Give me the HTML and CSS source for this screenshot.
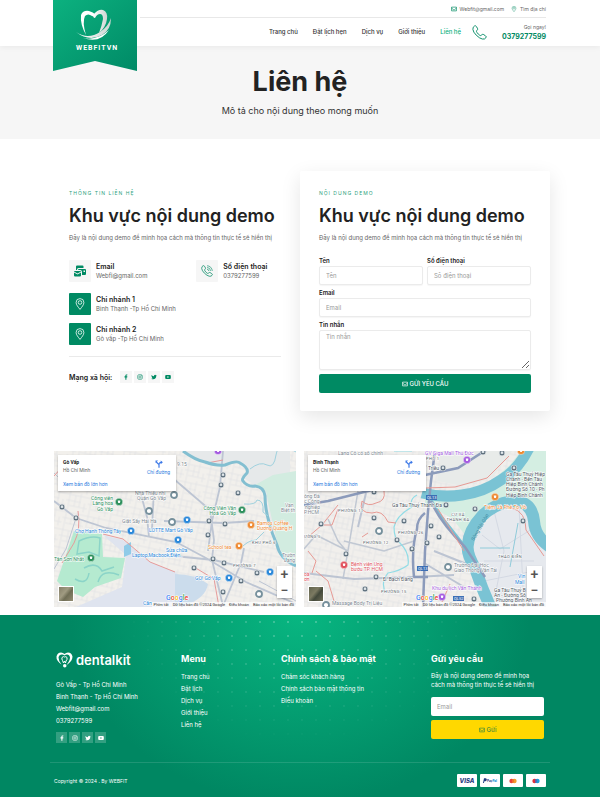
FILE: index.html
```html
<!DOCTYPE html>
<html lang="vi">
<head>
  <meta charset="UTF-8" />
  <meta name="viewport" content="width=device-width, initial-scale=1.0" />
  <title>Liên hệ</title>
  <link rel="stylesheet" href="styles.css">
</head>
<body>

  <!-- shared icons -->
  <svg class="sprite" aria-hidden="true">
    <symbol id="i-mail" viewBox="0 0 16 12"><path d="M1.5 1h13v10h-13zM1.5 3.5l4.8 4q1.7 1.2 3.4 0l4.8-4" fill="none" stroke="currentColor" stroke-width="1.8" stroke-linejoin="round"/></symbol>
    <symbol id="i-pin" viewBox="0 0 16 20"><path d="M8 19C5 15 1.5 11.500 1.500 7.500a6.500 6.500 0 0 1 13 0C14.500 11.500 11 15 8 19z" fill="none" stroke="currentColor" stroke-width="1.300"/><circle cx="8" cy="7.500" r="3" fill="none" stroke="currentColor" stroke-width="1.300"/></symbol>
    <symbol id="i-phone" viewBox="0 0 24 24"><path d="M2 3.500Q4 1 5.500 1.200Q7 1.500 9 6Q9.500 7.500 7.500 9Q6.500 10 8 12Q10 15 12.500 16.500Q14 17.500 15 16.200Q16.500 14.500 18 15Q22.500 17.500 22.800 18.800Q22.800 20.500 20 22.300Q17 23.500 12 20.500Q6 16.500 3 11.500Q.3 6.500 2 3.500z" fill="none" stroke="currentColor" stroke-width="1.500"/></symbol>
    <symbol id="i-call" viewBox="0 0 24 24"><use href="#i-phone"/><path d="M12 1.500a10.500 10.500 0 0 1 10.500 10.500M12 5a7 7 0 0 1 7 7M12 8.500a3.500 3.500 0 0 1 3.500 3.500" fill="none" stroke="currentColor" stroke-width="1.200"/></symbol>
    <symbol id="i-bulk" viewBox="0 0 24 22"><path d="M6 0h11a2 2 0 0 1 2 2v3H9a3 3 0 0 0-3 3v1H4V2a2 2 0 0 1 2-2z" fill="currentColor"/><path d="M10 7h12a2 2 0 0 1 2 2v8a2 2 0 0 1-2 2h-6v-6a4 4 0 0 0-4-4H8a2 2 0 0 1 2-2zM19 10v3h3v-3zM1 11h12q1 0 1 1l-7 4-7-4q0-1 1-1zM0 14l7 4 7-4v6a2 2 0 0 1-2 2H2a2 2 0 0 1-2-2z" fill="currentColor" fill-rule="evenodd"/></symbol>
    <symbol id="i-fb" viewBox="0 0 16 16"><path d="M6.300 15V9H4V6.300h2.300V4.500C6.300 2.200 7.600 1 9.700 1q1 0 2 .2v2.200h-1.200c-1.100 0-1.400.6-1.400 1.300v1.600h2.500L11.200 9H9.100v6z" fill="currentColor"/></symbol>
    <symbol id="i-ig" viewBox="0 0 16 16"><rect x="1.800" y="1.800" width="12.400" height="12.400" rx="3.500" fill="none" stroke="currentColor" stroke-width="1.500"/><circle cx="8" cy="8" r="3" fill="none" stroke="currentColor" stroke-width="1.500"/><circle cx="11.700" cy="4.300" r="1" fill="currentColor"/></symbol>
    <symbol id="i-tw" viewBox="0 0 16 16"><path d="M15.500 3.500q-.8.400-1.700.5.900-.6 1.300-1.600-.9.500-1.900.7A3 3 0 0 0 8 5.800Q4.200 5.600 1.600 2.500a3 3 0 0 0 .9 4q-.7 0-1.300-.4 0 2.400 2.400 3-.7.200-1.400 0 .6 2 2.800 2.100Q3.200 12.700.6 12.500 2.800 14 5.400 14c6 0 8.700-5 8.600-9q.9-.6 1.500-1.500z" fill="currentColor"/></symbol>
    <symbol id="i-yt" viewBox="0 0 16 16"><path d="M3 2.800h10q2.500 0 2.500 2.700v5q0 2.700-2.500 2.700H3Q.5 13.200.5 10.500v-5Q.5 2.800 3 2.800zM6.500 5.500v5L10.800 8z" fill="currentColor" fill-rule="evenodd"/></symbol>
    <symbol id="i-route" viewBox="0 0 12 12"><path d="M6 11.500V7L2 3M6 7q0-3.500 4-3.500" fill="none" stroke="#3b78e7" stroke-width="1.800"/><path d="M.8.800h3.800L.8 4.600zM8.500.8L11.800 3.500 8.500 6.200z" fill="#3b78e7"/></symbol>
    <symbol id="m-stop" viewBox="0 0 6 6"><rect x=".3" y=".3" width="5.400" height="5.400" rx="1.800" fill="#60727f" stroke="#fff" stroke-width=".5"/><path d="M1.800 1.500h2.400v2.400H1.800z" fill="#dfe6ea"/></symbol>
    <symbol id="m-pin" viewBox="0 0 10 10"><circle cx="5" cy="4.900" r="4.600" fill="currentColor" stroke="#fff" stroke-width=".5"/><path d="M3.400 3.200h3.200v1.600L6 6.400H4z" fill="#fff"/></symbol>
    <symbol id="m-dot" viewBox="0 0 8 8"><circle cx="4" cy="4" r="3" fill="#fff" stroke="#76909c" stroke-width="1.800"/></symbol>
  </svg>

  <header class="header">
    <div class="container header-inner">
      <a class="brand" href="#" aria-label="WEBFITVN">
        <svg viewBox="0 0 84 71">
          <defs>
            <linearGradient id="ribbon" x1="0" y1="0" x2="1" y2="1">
              <stop offset="0" stop-color="#0cb17f"/><stop offset="1" stop-color="#008a66"/>
            </linearGradient>
            <linearGradient id="silver"><stop offset="0" stop-color="#fff"/><stop offset="1" stop-color="#cdd5d2"/></linearGradient>
          </defs>
          <path d="M0 0h84v71L42 61 0 71z" fill="url(#ribbon)"/>
          <path d="M33 35Q27 24 28 15q2-5 8-4 4 1 7 4-2 2-4 1-4-3-7 0-3 6 1 19z" fill="#fff"/>
          <path d="M40 15q5-6 10-5 5 2 4 9-1 8-8 14 3-8 4-14 0-5-3-5-3 0-5 4-2 0-2-3z" fill="url(#silver)"/>
          <path d="M23 32q12 8 24 0Q55 27 58 18q0 12-9 17-13 7-26-3z" fill="url(#silver)"/>
          <path d="M30 38q14 3 26-8-9 14-26 8z" fill="#fff"/>
          <text x="23" y="50" class="brand-text">WEBFITVN</text>
        </svg>
      </a>
      <div class="header-main">
        <div class="topbar">
          <a href="#"><svg class="ico-top green"><use href="#i-mail"/></svg>Webfit@gmail.com</a>
          <a href="#"><svg class="ico-top green"><use href="#i-pin"/></svg>Tìm địa chỉ</a>
        </div>
        <div class="navbar">
          <nav class="nav">
            <a href="#">Trang chủ</a>
            <a href="#">Đặt lịch hẹn</a>
            <a href="#">Dịch vụ</a>
            <a href="#">Giới thiệu</a>
            <a href="#" class="active">Liên hệ</a>
          </nav>
          <svg class="ico-phone green"><use href="#i-phone"/></svg>
          <div class="call">
            <span>Gọi ngay!</span>
            <a href="#">0379277599</a>
          </div>
        </div>
      </div>
    </div>
  </header>

  <section class="hero">
    <h1>Liên hệ</h1>
    <p>Mô tả cho nội dung theo mong muốn</p>
  </section>

  <section class="container contact">
    <div class="panel">
      <div class="eyebrow">THÔNG TIN LIÊN HỆ</div>
      <h2>Khu vực nội dung demo</h2>
      <p class="lead">Đây là nội dung demo để minh họa cách mà thông tin thực tế sẽ hiển thị</p>
      <div class="info-grid">
        <div class="info">
          <span class="info-icon"><svg><use href="#i-bulk"/></svg></span>
          <div><h3>Email</h3><p>Webfi@gmail.com</p></div>
        </div>
        <div class="info">
          <span class="info-icon"><svg><use href="#i-call"/></svg></span>
          <div><h3>Số điện thoại</h3><p>0379277599</p></div>
        </div>
      </div>
      <div class="info branch">
        <span class="info-icon solid"><svg><use href="#i-pin"/></svg></span>
        <div><h3>Chi nhánh 1</h3><p>Bình Thạnh -Tp Hồ Chí Minh</p></div>
      </div>
      <div class="info branch">
        <span class="info-icon solid"><svg><use href="#i-pin"/></svg></span>
        <div><h3>Chi nhánh 2</h3><p>Gò vấp -Tp Hồ Chí Minh</p></div>
      </div>
      <div class="follow">
        <h3>Mạng xã hội:</h3>
        <div class="socials">
          <a href="#" aria-label="Facebook"><svg><use href="#i-fb"/></svg></a>
          <a href="#" aria-label="Instagram"><svg><use href="#i-ig"/></svg></a>
          <a href="#" aria-label="Twitter"><svg><use href="#i-tw"/></svg></a>
          <a href="#" aria-label="YouTube"><svg><use href="#i-yt"/></svg></a>
        </div>
      </div>
    </div>

    <div class="panel card">
      <div class="eyebrow">NỘI DUNG DEMO</div>
      <h2>Khu vực nội dung demo</h2>
      <p class="lead">Đây là nội dung demo để minh họa cách mà thông tin thực tế sẽ hiển thị</p>
      <form class="form">
        <div class="field">
          <label for="name">Tên</label>
          <input type="text" id="name" placeholder="Tên">
        </div>
        <div class="field">
          <label for="phone">Số điện thoại</label>
          <input type="tel" id="phone" placeholder="Số điện thoại">
        </div>
        <div class="field wide">
          <label for="email">Email</label>
          <input type="email" id="email" placeholder="Email">
        </div>
        <div class="field wide">
          <label for="message">Tin nhắn</label>
          <textarea id="message" placeholder="Tin nhắn"></textarea>
        </div>
        <button type="button" class="btn wide"><svg><use href="#i-mail"/></svg>GỬI YÊU CẦU</button>
      </form>
    </div>
  </section>

  <section class="container maps">
    <div class="map">
      <svg class="map-canvas" viewBox="0 0 242 156" preserveAspectRatio="xMidYMid slice">
        <defs>
          <pattern id="streets" width="22" height="18" patternUnits="userSpaceOnUse" patternTransform="rotate(12)">
            <path d="M0 3h22M0 9h15M4 14h18M3 0v18M9 3v11M14 0v14M19 9v9" stroke="#dddfe3" stroke-width=".6" fill="none"/>
          </pattern>
        </defs>
        <rect width="242" height="156" fill="#f2f0ec"/>
        <rect width="242" height="156" fill="url(#streets)"/>
        <path d="M129 0l22 11 20 3 13-3 9 8-4 8 12 7 10 5 3 15 3 18 8 22 11 14V0z" fill="#e6e9ea"/>
        <path d="M201 34l18-10 23-4v94l-11-6-8-17-8-36-3-15z" fill="#d2ece0"/>
        <path d="M49 84l20 5 27 22 25 10 16 12-6 23H22l46-20 4-32z" fill="#dfe4ef"/>
        <path d="M121 123q20 0 33 10-2 14-24 22h-9z" fill="#cbdcec"/>
        <path d="M20 80l28 3 1 23 22 1-4 20-26 9-12 10-17-7-9-9z" fill="#b5ead0"/>
        <path d="M25 90q12-6 21-3l-1 18-10-4-12 2zM30 117q12-7 18 3l12-4M21 128q12 7 14-6M44 131q4-14 21-7" fill="none" stroke="#8bd4c8" stroke-width="1.500"/>
        <path d="M70 95l7-4v12l-7 3z" fill="#8fcbe8"/>
        <g fill="none" stroke="#bdc5d3" stroke-width="1.800">
          <path d="M0 50l22 17 30 10 70 14 30 16 40 24 50 22M85 36l8 30 2 20M100 38l-2 40M121 29l35 30 4 30-2 20 11 46M169 0l-3 36-8 34-4 30M110 70l60 2 30-2M120 105l40 4 50 12M190 97l-3 15-18 43"/>
          <path d="M22 67L12 98l-12 20M0 22l18 18M205 130l37 20" stroke-width="1"/>
        </g>
        <path d="M24 60q3 18-4 32L8 112M49 83l20 5 27 23 25 10M140 116l20 12 5 28M153 12l16-3M0 25l9-10" fill="none" stroke="#e69b9b" stroke-width="1"/>
        <path d="M129 0q12 9 22 11 11 4 20 3 12-5 15-2 9 5 7 10-6 6-4 8 4 6 12 5 9 1 10 10 0 12 4 26 3 12 8 23 3 14 19 21" fill="none" stroke="#83bfd1" stroke-width="3"/>
        <path d="M196 18q10-8 17-4t9-10 20-3M190 53q12 1 13-4 7 0 6 12l5 4M186 98q8-9 16-9l8-8" fill="none" stroke="#9fd1de" stroke-width="1"/>
        <g>
          <use href="#m-stop" x="5" y="53" width="6" height="6"/><use href="#m-stop" x="19" y="64" width="6" height="6"/>
          <use href="#m-stop" x="166" y="21" width="6" height="6"/><use href="#m-stop" x="164" y="31" width="6" height="6"/>
          <use href="#m-stop" x="181" y="39" width="6" height="6"/><use href="#m-stop" x="152" y="67" width="6" height="6"/>
          <use href="#m-stop" x="168" y="70" width="6" height="6"/><use href="#m-stop" x="151" y="81" width="6" height="6"/>
          <use href="#m-stop" x="156" y="105" width="6" height="6"/><use href="#m-stop" x="167" y="109" width="6" height="6"/>
          <use href="#m-stop" x="137" y="114" width="6" height="6"/><use href="#m-stop" x="200" y="119" width="6" height="6"/>
          <use href="#m-stop" x="184" y="127" width="6" height="6"/><use href="#m-stop" x="166" y="138" width="6" height="6"/>
          <use href="#m-dot" x="91" y="56" width="8" height="8"/><use href="#m-dot" x="116" y="40" width="8" height="8"/>
          <use href="#m-dot" x="114" y="67" width="8" height="8"/><use href="#m-dot" x="201" y="139" width="8" height="8"/>
        </g>
        <g class="t-green"><use href="#m-pin" x="61" y="47" width="8" height="8"/><use href="#m-pin" x="33" y="103" width="8" height="8"/><use href="#m-pin" x="184" y="55" width="8" height="8"/>
          <text x="59" y="49" text-anchor="end">Công viên</text><text x="59" y="54" text-anchor="end">Làng hoa</text><text x="59" y="60" text-anchor="end">Gò Vấp</text>
          <text x="0" y="110">Tân Sơn Nhất</text>
          <text x="182" y="59" text-anchor="end">Công Viên Văn</text><text x="182" y="64" text-anchor="end">Hoá Gò Vấp</text>
        </g>
        <g class="t-blue"><use href="#m-pin" x="73" y="76" width="8" height="8"/><use href="#m-pin" x="129" y="65" width="8" height="8"/><use href="#m-pin" x="120" y="85" width="8" height="8"/><use href="#m-pin" x="171" y="123" width="8" height="8"/><use href="#m-pin" x="212" y="117" width="8" height="8"/>
          <text x="21" y="82">Chợ Hạnh Thông Tây</text><text x="95" y="81">LOTTE Mart Gò Vấp</text>
          <text x="112" y="101">Sửa chữa</text><text x="78" y="106">Laptop,Macbook,Điện..</text>
          <text x="141" y="129">GO! Gò Vấp</text><text x="89" y="154">Cần</text>
        </g>
        <g class="t-orange"><use href="#m-pin" x="193" y="70" width="8" height="8"/><use href="#m-pin" x="181" y="91" width="8" height="8"/>
          <text x="203" y="74">Bamos Coffee</text><text x="203" y="79">Dương Quảng H</text><text x="154" y="98">School tea</text>
        </g>
        <g class="t-purple"><use href="#m-pin" x="160" y="-4" width="8" height="8"/></g>
        <g class="t-grey">
          <text x="81" y="44">Nhà Thiếu nhi</text><text x="83" y="49">Quận Gò Vấp</text><text x="68" y="72">Giặt Sấy Hải Hà</text>
          <text x="231" y="56">Vạn</text><text x="227" y="61">Biệt th</text><text x="228" y="106">Trườn</text><text x="230" y="111">Lang</text><text x="123" y="15">9.15</text>
        </g>
        <g class="t-area"><text x="198" y="93">KHU PHỐ 6</text><text x="179" y="116">PHƯỜNG 7</text></g>
        <text class="t-google" x="112" y="149"><tspan fill="#4285f4">G</tspan><tspan fill="#ea4335">o</tspan><tspan fill="#fbbc05">o</tspan><tspan fill="#4285f4">g</tspan><tspan fill="#34a853">l</tspan><tspan fill="#ea4335">e</tspan></text>
      </svg>
      <div class="map-card">
        <div><strong>Gò Vấp</strong><span>Hồ Chí Minh</span><a href="#">Xem bản đồ lớn hơn</a></div>
        <a href="#" class="route"><svg><use href="#i-route"/></svg>Chỉ đường</a>
      </div>
      <div class="map-thumb"></div>
      <div class="map-zoom"><button type="button" aria-label="Phóng to">+</button><button type="button" aria-label="Thu nhỏ">−</button></div>
      <div class="map-legal"><span>Phím tắt</span><span>Dữ liệu bản đồ ©2024 Google</span><span>Điều khoản</span><span>Báo cáo một lỗi bản đồ</span></div>
    </div>

    <div class="map">
      <svg class="map-canvas" viewBox="0 0 242 156" preserveAspectRatio="xMidYMid slice">
        <rect width="242" height="156" fill="#f1efec"/>
        <rect width="242" height="156" fill="url(#streets)"/>
        <path d="M121 45h30l30-10 24-20 12-15h25v94l-12-12-2-28-14-6-20 6-22 20-8 14-15-20-28-16z" fill="#d4eee2"/>
        <path d="M133 30l25 5 30-8 20-27h-70z" fill="#e8ebe9"/>
        <path d="M184 154l-16-56 8-20 20-22 18-4 12 6 5 20 11 18v60z" fill="#e6e9ee"/>
        <path d="M178 84l18 14 32-20M190 60l10 40-8 40M180 110h50M215 56l4 80M180 130l50-10" fill="none" stroke="#d4d9e3" stroke-width="1"/>
        <path d="M40 90l40 10 30-10M55 34l-10 60-6 34M44 100L12 84 0 98M24 68l10 22 10 12" fill="none" stroke="#c1c8d3" stroke-width="1.500"/>
        <path d="M0 122l50 6 60-2 40-2M62 42l-8 34M120 112l40 24M130 100l50 20" fill="none" stroke="#bcc4d2" stroke-width="2"/>
        <g fill="none" stroke="#7ac3d4">
          <path d="M118 42q20 5 40 2 22-3 39-15 17-10 28-32" stroke-width="11"/>
          <path d="M188 160q-10-22-17-43-9-15-7-24 1-14 14-28 14-14 34-15 16 2 18 20 1 16 16 26" stroke-width="12"/>
          <path d="M127 49l8 14 30 38" stroke-width="3"/>
          <path d="M90 0h18M113 44q-8 4-5 12-15 8-18 20 0 12 6 16 10 10 8 22-8 6-20 8-8 10-2 20" stroke="#91dce6" stroke-width="1.200"/>
          <path d="M176 97h30M214 72l-8 44" stroke-width=".8"/>
        </g>
        <g fill="none" stroke="#8c9bbb" stroke-width="2.500">
          <path d="M131 0l-4 30-3 30-3 40-2 56M121 24l33-7 28-18M0 54l24-4 48-12 50-24M121 62q-8 6-8 16-6 20-3 48h14M127 50q8 20 34 46l20 30"/>
        </g>
        <path d="M56 36q18-4 24 4 2 10-8 12-8 4-14-2-4 12 10 12 10-4 16 9l8 1M34 54L18 74 4 86M34 58l-6 16-10 0M8 122l4-12-8-10M12 120l12 10 6 20M64 82l-6 4M134 58l26 42M121 37l30-1 32-9 22-22M208 57q14 4 14 22l18 26M146 133l-8 18" fill="none" stroke="#e79a94" stroke-width="1"/>
        <g>
          <use href="#m-stop" x="14" y="70" width="6" height="6"/><use href="#m-stop" x="67" y="64" width="6" height="6"/>
          <use href="#m-stop" x="97" y="67" width="6" height="6"/><use href="#m-stop" x="90" y="86" width="6" height="6"/>
          <use href="#m-stop" x="105" y="95" width="6" height="6"/><use href="#m-stop" x="39" y="100" width="6" height="6"/>
          <use href="#m-stop" x="69" y="123" width="6" height="6"/><use href="#m-stop" x="58" y="135" width="6" height="6"/>
          <use href="#m-stop" x="67" y="38" width="6" height="6"/><use href="#m-stop" x="136" y="14" width="6" height="6"/>
          <use href="#m-stop" x="176" y="-2" width="6" height="6"/><use href="#m-stop" x="195" y="-1" width="6" height="6"/>
          <use href="#m-stop" x="207" y="14" width="6" height="6"/><use href="#m-stop" x="168" y="55" width="6" height="6"/>
          <use href="#m-stop" x="216" y="67" width="6" height="6"/><use href="#m-stop" x="124" y="72" width="6" height="6"/>
          <use href="#m-stop" x="132" y="83" width="6" height="6"/><use href="#m-stop" x="120" y="89" width="6" height="6"/>
          <use href="#m-stop" x="167" y="145" width="6" height="6"/><use href="#m-stop" x="139" y="51" width="6" height="6"/>
          <use href="#m-dot" x="71" y="76" width="8" height="8"/><use href="#m-dot" x="140" y="112" width="8" height="8"/><use href="#m-dot" x="18" y="150" width="8" height="8"/>
        </g>
        <g class="t-tag">
          <rect x="122" y="44" width="11" height="5"/><rect x="113" y="115" width="11" height="5"/><rect x="149" y="145" width="11" height="5"/>
          <text x="123" y="48">QL13</text><text x="114" y="119">QL13</text><text x="150" y="149">QL52</text>
        </g>
        <g class="t-red"><use href="#m-pin" x="36" y="110" width="8" height="8"/>
          <text x="47" y="115">Bệnh viện Ung</text><text x="47" y="120">bướu TP. HCM</text><text x="0" y="125">oà</text><text x="0" y="130">ơn</text>
        </g>
        <g class="t-orange"><use href="#m-pin" x="187" y="42" width="8" height="8"/><use href="#m-pin" x="213" y="-4" width="8" height="8"/><text x="180" y="58">Tiệm Cà Phê Tọ Vò</text></g>
        <g class="t-purple"><use href="#m-pin" x="159" y="5" width="8" height="8"/><use href="#m-pin" x="134" y="142" width="8" height="8"/>
          <text x="121" y="4">GV Giga Mall Thủ Đức</text><text x="128" y="139">Khu du lịch Văn Thánh</text>
        </g>
        <g class="t-blue"><text x="214" y="127">Vin</text><text x="211" y="133">Mall</text></g>
        <g class="t-grey">
          <text x="34" y="4">Lang Cô có số chính</text>
          <text x="0" y="47">ông Đà</text><text x="0" y="52">c Công</text><text x="1" y="58">nghiệp</text><text x="0" y="63">P.HCM</text>
          <text x="28" y="154">Massage Body Trị Liệu</text><text x="150" y="116">Trường Đại Học</text><text x="150" y="121">Giao Thông Vận Tải</text>
        </g>
        <g class="t-dark">
          <text x="88" y="56">Ga Tàu Thuỷ Thanh Đa</text><text x="79" y="130">Đ. Bạch Đằng</text><text x="124" y="19">Triều</text>
          <text x="202" y="25">Ga Tàu Thuỷ Hiệp</text><text x="202" y="30">Chánh - Bến Tàu</text><text x="202" y="35">Hiệp Bình Chánh</text><text x="202" y="40">Đường Số 10 - Ph</text><text x="202" y="46">Hiệp Bình Chánh</text>
          <text x="190" y="141">Ga Tàu Thuỷ B</text><text x="190" y="146">An - Đường Số</text><text x="192" y="151">Phường Bình An</text>
        </g>
        <g class="t-area">
          <text x="122" y="9">PHỐ 1</text><text x="34" y="61">PHƯỜNG 11</text><text x="0" y="87">ƯỜNG 5</text><text x="59" y="93">PHƯỜNG 12</text><text x="94" y="83">PHƯỜNG 26</text><text x="77" y="142">PHƯỜNG 15</text>
          <text x="154" y="65" text-anchor="middle">CƯ XÁ</text><text x="154" y="70" text-anchor="middle">THANH ĐA</text><text x="194" y="107">THẢO ĐIỀN</text>
        </g>
        <text class="t-river" x="170" y="90" transform="rotate(-60 170 90)">Sông Sài Gòn</text>
        <text class="t-google" x="112" y="149"><tspan fill="#4285f4">G</tspan><tspan fill="#ea4335">o</tspan><tspan fill="#fbbc05">o</tspan><tspan fill="#4285f4">g</tspan><tspan fill="#34a853">l</tspan><tspan fill="#ea4335">e</tspan></text>
      </svg>
      <div class="map-card">
        <div><strong>Bình Thạnh</strong><span>Hồ Chí Minh</span><a href="#">Xem bản đồ lớn hơn</a></div>
        <a href="#" class="route"><svg><use href="#i-route"/></svg>Chỉ đường</a>
      </div>
      <div class="map-thumb dark"></div>
      <div class="map-zoom"><button type="button" aria-label="Phóng to">+</button><button type="button" aria-label="Thu nhỏ">−</button></div>
      <div class="map-legal"><span>Phím tắt</span><span>Dữ liệu bản đồ ©2024 Google</span><span>Điều khoản</span><span>Báo cáo một lỗi bản đồ</span></div>
    </div>
  </section>

  <footer class="footer">
    <div class="container">
      <div class="footer-cols">
        <div>
          <a class="footer-logo" href="#">
            <svg viewBox="0 0 34 32">
              <path d="M11 25Q0 17 1 9 3 1 10 1q4 0 7 3 3-3 7-3 7 0 9 8 0 8-9 15l-3 2q7-9 7-15-1-6-6-6-3 0-5 2-2-2-5-2-6 0-7 6 0 7 6 14z" fill="#fff"/>
              <path d="M12 11q3-3 5-1 3-2 5 1 1 4-2 7l-1 4-2-4-2 4-2-5q-2-3-1-6z" fill="none" stroke="#fff" stroke-width="2"/>
              <circle cx="17.500" cy="27.500" r="3.500" fill="#fff"/>
            </svg>dentalkit</a>
          <ul class="links">
            <li>Gò Vấp - Tp Hồ Chí Minh</li>
            <li>Bình Thạnh - Tp Hồ Chí Minh</li>
            <li>Webfit@gmail.com</li>
            <li>0379277599</li>
          </ul>
          <div class="socials on-dark">
            <a href="#" aria-label="Facebook"><svg><use href="#i-fb"/></svg></a>
            <a href="#" aria-label="Instagram"><svg><use href="#i-ig"/></svg></a>
            <a href="#" aria-label="Twitter"><svg><use href="#i-tw"/></svg></a>
            <a href="#" aria-label="YouTube"><svg><use href="#i-yt"/></svg></a>
          </div>
        </div>
        <div>
          <h4>Menu</h4>
          <ul class="links">
            <li><a href="#">Trang chủ</a></li>
            <li><a href="#">Đặt lịch</a></li>
            <li><a href="#">Dịch vụ</a></li>
            <li><a href="#">Giới thiệu</a></li>
            <li><a href="#">Liên hệ</a></li>
          </ul>
        </div>
        <div>
          <h4>Chính sách &amp; bảo mật</h4>
          <ul class="links">
            <li><a href="#">Chăm sóc khách hàng</a></li>
            <li><a href="#">Chính sách bảo mật thông tin</a></li>
            <li><a href="#">Điều khoản</a></li>
          </ul>
        </div>
        <div>
          <h4>Gửi yêu cầu</h4>
          <p class="footer-text">Đây là nội dung demo để minh họa cách mà thông tin thực tế sẽ hiển thị</p>
          <form class="subscribe">
            <input type="email" placeholder="Email" aria-label="Email">
            <button type="button" class="btn yellow"><svg><use href="#i-mail"/></svg>Gửi</button>
          </form>
        </div>
      </div>
      <div class="footer-bottom">
        <span>Copyright © 2024 . By WEBFIT</span>
        <div class="pay">
          <span class="visa">VISA</span>
          <span class="paypal"><svg viewBox="0 0 6 8"><path d="M1.500 0H4q2 .3 1.700 2.200Q5.200 4.500 3 4.500H2L1.500 7H0z" fill="#1f3a80"/></svg>Pay<b>Pal</b></span>
          <span><svg viewBox="0 0 12 8"><circle cx="4" cy="4" r="3.500" fill="#e9403a"/><circle cx="8" cy="4" r="3.500" fill="#f39b2d"/><path d="M6 1.100a3.500 3.500 0 0 1 0 5.800 3.500 3.500 0 0 1 0-5.800z" fill="#ef6c2d"/></svg></span>
          <span><svg viewBox="0 0 12 8"><circle cx="4" cy="4" r="3.500" fill="#e0303c"/><circle cx="8" cy="4" r="3.500" fill="#1d9ddb"/><path d="M6 1.100a3.500 3.500 0 0 1 0 5.800 3.500 3.500 0 0 1 0-5.800z" fill="#5d61ae"/></svg></span>
        </div>
      </div>
    </div>
  </footer>

</body>
</html>
```
FILE: styles.css
```css
* {
  box-sizing: border-box;
}

body {
  margin: 0;
  font-family: Inter, "Liberation Sans", sans-serif;
  font-size: 6px;
  line-height: 8px;
  background: #fff;
  color: #666;
}

h1, h2, h3, h4, p, ul {
  margin: 0;
  padding: 0;
}

ul {
  list-style: none;
}

a {
  color: inherit;
  text-decoration: none;
}

input, textarea, button {
  font-family: inherit;
  font-size: 6px;
  line-height: 8px;
}

.sprite {
  display: none;
}

.container {
  max-width: 500px;
  margin: 0 auto;
}

.green {
  color: #008a63;
}

/* header */

.header {
  position: relative;
  z-index: 2;
  background: #fff;
  box-shadow: 0 1px 6px rgba(0, 0, 0, 0.06);
}

.header-inner {
  position: relative;
  padding: 0 4px 0 90px;
}

.brand {
  position: absolute;
  top: 0;
  left: 3px;
  width: 84px;
}

.brand svg {
  display: block;
  width: 100%;
}

.brand-text {
  font-family: Roboto, sans-serif;
  font-size: 7px;
  font-weight: 700;
  letter-spacing: 1px;
  fill: #fff;
}

.topbar {
  display: flex;
  justify-content: flex-end;
  gap: 7px;
  padding: 5px 0 4px;
  border-bottom: 1px solid #e8e8e8;
  font-size: 5px;
}

.topbar a {
  display: flex;
  align-items: center;
  gap: 3px;
}

.ico-top {
  width: 6px;
  height: 6px;
}

.navbar {
  display: flex;
  justify-content: flex-end;
  align-items: center;
  height: 28px;
}

.nav {
  display: flex;
  gap: 15px;
  font-weight: 500;
  color: #333;
}

.nav .active {
  color: #08b07c;
}

.ico-phone {
  width: 15px;
  height: 15px;
  margin: 0 15px 0 11px;
}

.call {
  text-align: right;
}

.call span,
.call a {
  display: block;
  line-height: 9px;
}

.call span {
  font-size: 5px;
}

.call a {
  color: #008a63;
  font-size: 7px;
  font-weight: 700;
}

/* page title */

.hero {
  padding: 18px 0 21px;
  text-align: center;
  background: #f6f6f6;
}

.hero h1 {
  color: #222;
  font-size: 27px;
  line-height: 36px;
}

.hero p {
  margin-top: 4px;
  color: #333;
  font-size: 9px;
  line-height: 14px;
}

/* contact */

.contact {
  display: grid;
  grid-template-columns: minmax(0, 1fr) minmax(0, 1fr);
  margin-top: 32px;
}

.panel {
  padding: 18px 19px;
}

.card {
  background: #fff;
  border-radius: 2px;
  box-shadow: 0 6px 20px rgba(0, 0, 0, 0.1);
}

.eyebrow {
  color: #2c9f7d;
  font-size: 5px;
  letter-spacing: 1px;
}

.panel h2 {
  margin-top: 6px;
  color: #222;
  font-size: 18px;
  font-weight: 600;
  line-height: 26px;
  white-space: nowrap;
}

.panel .lead {
  margin: 4px 0 14px;
  line-height: 10px;
  white-space: nowrap;
}

.panel h3 {
  color: #222;
  font-size: 7px;
  font-weight: 600;
  line-height: 9px;
}

.info-grid {
  display: grid;
  grid-template-columns: 3fr 2fr;
  margin: 17px 0 11px;
}

.info {
  display: flex;
  align-items: center;
  gap: 5px;
  line-height: 9px;
  white-space: nowrap;
}

.branch {
  margin-bottom: 8px;
}

.info-icon {
  display: flex;
  align-items: center;
  justify-content: center;
  width: 22px;
  height: 22px;
  background: #f6f6f6;
  color: #008a63;
  border-radius: 1px;
}

.info-icon svg {
  width: 12px;
  height: 12px;
}

.info-icon.solid {
  background: #008a63;
  color: #fff;
}

.follow {
  display: flex;
  align-items: center;
  gap: 8px;
  margin-top: 11px;
  padding-top: 14px;
  border-top: 1px solid #eaeaea;
}

.socials {
  display: flex;
  gap: 2px;
}

.socials a {
  display: flex;
  align-items: center;
  justify-content: center;
  width: 12px;
  height: 12px;
  background: #f6f6f6;
  color: #008a63;
}

.socials svg {
  width: 6px;
  height: 6px;
}

/* form */

.form {
  display: grid;
  grid-template-columns: 1fr 1fr;
  gap: 4px;
}

.wide {
  grid-column: 1 / -1;
}

.field label {
  display: block;
  margin-bottom: 1px;
  color: #222;
  font-weight: 600;
}

.field input,
.field textarea {
  display: block;
  width: 100%;
  height: 19px;
  padding: 0 6px;
  border: 1px solid #ebebeb;
  border-radius: 2px;
  background: #fff;
  color: #333;
  box-shadow: 0 1px 1px rgba(0, 0, 0, 0.04);
}

.field textarea {
  height: 40px;
  padding-top: 2px;
}

::placeholder {
  color: #999;
  opacity: 1;
}

.btn {
  display: flex;
  align-items: center;
  justify-content: center;
  gap: 2px;
  height: 19px;
  border: none;
  border-radius: 2px;
  background: #008a63;
  color: #fff;
  font-weight: 500;
  cursor: pointer;
}

.btn svg {
  width: 6px;
  height: 6px;
}

/* maps */

.maps {
  display: grid;
  grid-template-columns: 1fr 1fr;
  gap: 8px;
  margin-top: 40px;
  margin-bottom: 8px;
  padding: 0 4px;
}

.map {
  position: relative;
  overflow: hidden;
  font-family: Roboto, sans-serif;
}

.map-canvas {
  display: block;
  width: 100%;
}

.map-canvas text {
  font-size: 5px;
  fill: currentColor;
  stroke: #fff;
  stroke-width: 1px;
  paint-order: stroke;
}

.t-green { color: #2c8f5b; }
.t-blue { color: #2786d9; }
.t-orange { color: #ee8a33; }
.t-purple { color: #a45be0; }
.t-red { color: #e0505c; }
.t-grey { color: #7b868f; }
.t-dark { color: #4d565e; }
.t-area { color: #555d66; }
.t-tag { color: #3d6fb5; }

.map-canvas .t-area text {
  font-size: 4px;
  letter-spacing: 0.1em;
}

.t-tag rect {
  fill: currentColor;
}

.map-canvas .t-tag text {
  font-size: 4px;
  fill: #fff;
  stroke: none;
}

.map-canvas .t-river {
  fill: #3d8ba3;
  stroke: none;
}

.map-canvas .t-google {
  font-size: 7px;
  font-weight: 500;
}

.map-card {
  position: absolute;
  top: 4px;
  left: 4px;
  display: flex;
  justify-content: space-between;
  width: 118px;
  height: 36px;
  padding: 3px 6px 2px 5px;
  background: #fff;
  box-shadow: 0 1px 2px rgba(0, 0, 0, 0.3);
  font-size: 5px;
}

.map-card strong,
.map-card span,
.map-card div a {
  display: block;
}

.map-card strong {
  color: #222;
}

.map-card div a {
  margin-top: 6px;
}

.map-card a {
  color: #2f7de0;
}

.route {
  text-align: center;
}

.route svg {
  display: block;
  width: 8px;
  height: 8px;
  margin: 2px auto 0;
}

.map-thumb {
  position: absolute;
  left: 4px;
  bottom: 5px;
  width: 16px;
  height: 16px;
  border: 1px solid #fff;
  background: linear-gradient(130deg, #857f68, #a09b82 40%, #6f6d55 60%, #938c72);
}

.map-thumb.dark {
  background: linear-gradient(130deg, #62644d, #7c7a62 40%, #43493b 60%, #6e6c56);
}

.map-zoom {
  position: absolute;
  right: 4px;
  bottom: 9px;
  width: 15px;
  background: #fff;
  box-shadow: 0 1px 2px rgba(0, 0, 0, 0.3);
}

.map-zoom button {
  display: block;
  width: 100%;
  height: 16px;
  padding: 0;
  border: none;
  background: none;
  color: #555;
  font-size: 14px;
  font-weight: 500;
  line-height: 16px;
}

.map-legal {
  position: absolute;
  right: 0;
  bottom: 0;
  display: flex;
  gap: 4px;
  padding: 0 2px;
  background: rgba(255, 255, 255, 0.7);
  color: #333;
  font-size: 4px;
  line-height: 5px;
  white-space: nowrap;
}

/* footer */

.footer {
  position: relative;
  padding: 37px 0 10px;
  background: #008762 radial-gradient(ellipse 230px 190px at 50% 0, #08b681, #008762) no-repeat;
  color: #fff;
}

.footer::before {
  content: "";
  position: absolute;
  inset: 0;
  background: radial-gradient(circle, rgba(255, 255, 255, 0.25) 1px, transparent 1px) 1px 0 / 14px 14px;
  -webkit-mask: radial-gradient(ellipse 180px 130px at 50% 0, #000, transparent);
  mask: radial-gradient(ellipse 180px 130px at 50% 0, #000, transparent);
}

.footer .container {
  position: relative;
}

.footer-cols {
  display: grid;
  grid-template-columns: 5fr 4fr 6fr 5fr;
  min-height: 110px;
}

.footer-cols > div {
  padding: 0 6px;
}

.footer-logo {
  display: flex;
  align-items: center;
  gap: 3px;
  height: 16px;
  margin-bottom: 11px;
  font-size: 13px;
  font-weight: 600;
}

.footer-logo svg {
  width: 17px;
  height: 16px;
}

.footer h4 {
  margin-bottom: 6px;
  font-size: 9px;
  line-height: 13px;
  white-space: nowrap;
}

.links li {
  line-height: 12px;
  white-space: nowrap;
}

.socials.on-dark {
  margin-top: 5px;
}

.on-dark a {
  width: 11px;
  height: 11px;
  background: rgba(255, 255, 255, 0.2);
  color: #fff;
}

.footer-text {
  line-height: 9px;
}

.subscribe {
  margin-top: 8px;
}

.subscribe input {
  display: block;
  width: 100%;
  height: 19px;
  margin-bottom: 4px;
  padding: 0 6px;
  border: none;
  border-radius: 2px;
}

.subscribe .btn {
  width: 100%;
}

.btn.yellow {
  background: #ffd800;
  color: #3d8a3a;
}

.footer-bottom {
  display: flex;
  align-items: center;
  justify-content: space-between;
  padding: 11px 4px 0;
  border-top: 1px solid rgba(255, 255, 255, 0.12);
  font-size: 5px;
}

.pay {
  display: flex;
  gap: 3px;
}

.pay > span {
  display: flex;
  align-items: center;
  justify-content: center;
  width: 20px;
  height: 13px;
  border-radius: 1px;
  background: #fff;
  color: #1f3a80;
  font-size: 3px;
  font-weight: 700;
}

.pay svg {
  width: 8px;
  height: 6px;
}

.pay .visa {
  font-size: 6px;
  font-style: italic;
  font-weight: 800;
}

.pay .paypal svg {
  width: 4px;
}

.paypal b {
  color: #2a9bd8;
}
```
